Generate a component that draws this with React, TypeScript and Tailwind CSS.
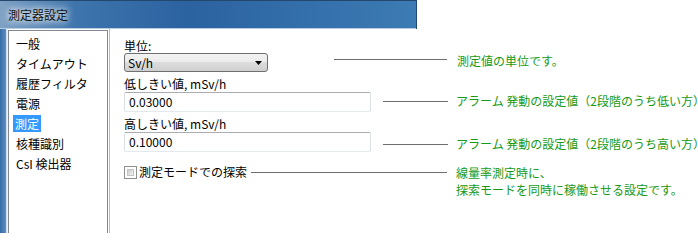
import React from "react";

const items = ["一般", "タイムアウト", "履歴フィルタ", "電源", "測定", "核種識別", "CsI 検出器"];

function Callout({ children }: { children: React.ReactNode }) {
  return <div className="text-[#169a16] leading-[16px] whitespace-nowrap">{children}</div>;
}

export default function App() {
  return (
    <div className="w-[698px] h-[233px] bg-white overflow-hidden text-[12px] text-black font-['Noto_Sans_CJK_JP',sans-serif]">
      {/* title bar */}
      <div className="w-[417px] h-[29px] flex items-center border-t border-r border-[#23476d] bg-[linear-gradient(90deg,#7fa2c4_0%,#3f75ad_18%,#2b62a0_45%,#3470ab_75%,#3d7bb4_100%)] shadow-[inset_0_-1px_0_#b9cde2]">
        <span className="ml-[8px] text-[12px] leading-[16px] text-[#111] [text-shadow:0_0_6px_#fff,0_0_10px_#fff]">
          測定器設定
        </span>
      </div>

      <div className="flex h-[204px]">
        {/* left frame */}
        <div className="flex shrink-0">
          <div className="w-[6px] bg-[linear-gradient(90deg,#356ca6,#5f8fc0)]" />
          <div className="w-[1px] bg-[#cfdceb]" />
          <div className="w-[1px] bg-[#f0f0f0]" />
        </div>

        {/* list */}
        <div className="w-[100px] shrink-0 mt-[1px] border border-[#828790] border-b-0 bg-white pt-[2px] pl-[4px]">
          {items.map((it) => (
            <div key={it} className="h-[20px] flex items-center">
              <span
                className={
                  it === "測定"
                    ? "px-[2px] h-[17px] leading-[17px] bg-[#3399ff] text-white"
                    : "px-[3px] h-[17px] leading-[17px]"
                }
              >
                {it}
              </span>
            </div>
          ))}
        </div>
        <div className="w-[1px] shrink-0 bg-white" />

        {/* content */}
        <div className="flex-1 min-w-0 overflow-hidden border-l border-[#b9b9b9] pl-[14px] pt-[9px]">
          {/* row 1 */}
          <div className="flex items-start">
            <div className="flex flex-col w-[144px] shrink-0">
              <div className="h-[15px] leading-[15px]">単位:</div>
              <div className="h-[19px] rounded-[3px] border border-[#707070] bg-[linear-gradient(#f2f2f2_0%,#ebebeb_50%,#dddddd_50%,#cfcfcf_100%)] flex items-center justify-between pl-[3px] pr-[5px]">
                <span className="leading-[15px]">Sv/h</span>
                <svg width="7" height="4" viewBox="0 0 7 4">
                  <path d="M0 0 H7 L3.5 4 Z" fill="#000" />
                </svg>
              </div>
            </div>
            <div className="ml-[66px] mt-[21px] w-[113px] h-[1px] shrink-0 bg-[#6e6e6e]" />
            <div className="ml-[10px] mt-[15px] shrink-0">
              <Callout>測定値の単位です。</Callout>
            </div>
          </div>

          {/* row 2 */}
          <div className="flex items-start mt-[4px]">
            <div className="flex flex-col w-[247px] shrink-0">
              <div className="h-[16px] leading-[16px]">低しきい値, mSv/h</div>
              <div className="h-[20px] rounded-[2px] border border-[#dbdfe6] border-t-[#abadb3] border-b-[#e3e9ef] flex items-center pl-[4px]">
                0.03000
              </div>
            </div>
            <div className="ml-[12px] mt-[25px] w-[65px] h-[1px] shrink-0 bg-[#6e6e6e]" />
            <div className="ml-[8px] mt-[17px] shrink-0">
              <Callout>アラーム 発動の設定値（2段階のうち低い方）</Callout>
            </div>
          </div>

          {/* row 3 */}
          <div className="flex items-start mt-[4px]">
            <div className="flex flex-col w-[247px] shrink-0">
              <div className="h-[16px] leading-[16px]">高しきい値, mSv/h</div>
              <div className="h-[20px] rounded-[2px] border border-[#dbdfe6] border-t-[#abadb3] border-b-[#e3e9ef] flex items-center pl-[4px]">
                0.10000
              </div>
            </div>
            <div className="ml-[12px] mt-[28px] w-[65px] h-[1px] shrink-0 bg-[#6e6e6e]" />
            <div className="ml-[8px] mt-[20px] shrink-0">
              <Callout>アラーム 発動の設定値（2段階のうち高い方）</Callout>
            </div>
          </div>

          {/* row 4 */}
          <div className="flex items-start mt-[13px]">
            <div className="flex items-center w-[127px] h-[14px] shrink-0">
              <div className="w-[13px] h-[13px] shrink-0 border border-[#8f8f8f] bg-white p-[2px]">
                <div className="w-full h-full bg-[linear-gradient(135deg,#cbcbcb,#f4f4f4)] border border-[#c4c4c4]" />
              </div>
              <span className="ml-[2px] leading-[14px] whitespace-nowrap">測定モードでの探索</span>
            </div>
            <div className="mt-[7px] w-[196px] h-[1px] shrink-0 bg-[#6e6e6e]" />
            <div className="ml-[9px] -mt-[1px] shrink-0 text-[#169a16] leading-[17px] whitespace-nowrap">
              <div>線量率測定時に、</div>
              <div>探索モードを同時に稼働させる設定です。</div>
            </div>
          </div>
        </div>
      </div>
    </div>
  );
}
